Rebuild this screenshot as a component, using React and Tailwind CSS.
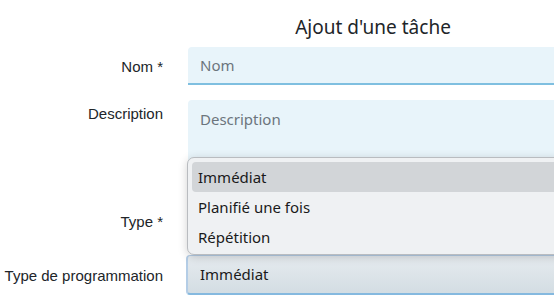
import React from 'react';

const labelCls = "text-right text-[15px] text-[#212529] pr-[25px]";

const Row = ({ label, top, children, className = "" }) => (
  <div className={`flex ${className}`}>
    <div className={`w-[188px] shrink-0 ${labelCls}`} style={{ paddingTop: top }}>
      {label}
    </div>
    <div className="w-[370px] shrink-0">{children}</div>
  </div>
);

const App = () => {
  const options = ["Immédiat", "Planifié une fois", "Répétition"];

  return (
    <div className="relative w-[554px] h-[297px] overflow-hidden bg-white font-['Liberation_Sans',Arial,sans-serif]">
      <div className="flex">
        <div className="w-[188px] shrink-0" />
        <h1 className="w-[370px] shrink-0 text-center pt-[13px] h-[47px] text-[19px] leading-[28px] text-[#212529] font-['Noto_Sans',sans-serif]">
          Ajout d'une tâche
        </h1>
      </div>

      <Row label="Nom *" top={9}>
        <div className="h-[38px] rounded-t-[4px] bg-[#e8f4fa] border-b-2 border-[#7fbfe0] px-3 flex items-center text-[15px] text-[#6c757d] font-['Noto_Sans',sans-serif]">
          Nom
        </div>
      </Row>

      <Row label="Description" top={3} className="mt-[15px]">
        <div className="h-[86px] rounded-t-[4px] bg-[#e8f4fa] px-3 pt-[8px] text-[15px] text-[#6c757d] font-['Noto_Sans',sans-serif]">
          Description
        </div>
      </Row>

      <Row label="Type *" top={10} className="mt-[15px]">
        <div className="h-[38px] rounded-t-[4px] bg-[#e3e9ed] border-b-2 border-[#7fbfe0]" />
      </Row>

      <Row label="Type de programmation" top={10} className="mt-[16px]">
        <div className="h-[40px] rounded-[4px] bg-gradient-to-b from-[#e6ebef] to-[#d3dde3] border-l-2 border-t border-[#b4cde6] border-b-2 border-b-[#85b9df] pl-[12px] flex items-center text-[15px] text-[#1a1a1a] font-['Noto_Sans',sans-serif] -ml-[2px]">
          Immédiat
        </div>
      </Row>

      {/* native select popup */}
      <div className="absolute left-[187px] top-[157px] w-[380px] h-[98px] rounded-[7px] border border-[#b9bcc0] bg-[#eff1f3] shadow-[0_2px_10px_rgba(0,0,0,0.18)] pt-[4px] px-[4px] font-['Noto_Sans',sans-serif] text-[15px] text-[#1a1a1a]">
        {options.map((o, i) => (
          <div
            key={o}
            className={`h-[30px] flex items-center pl-[6px] rounded-[4px] ${i === 0 ? "bg-[#d2d5d8]" : ""}`}
          >
            {o}
          </div>
        ))}
      </div>
    </div>
  );
};

export default App;
